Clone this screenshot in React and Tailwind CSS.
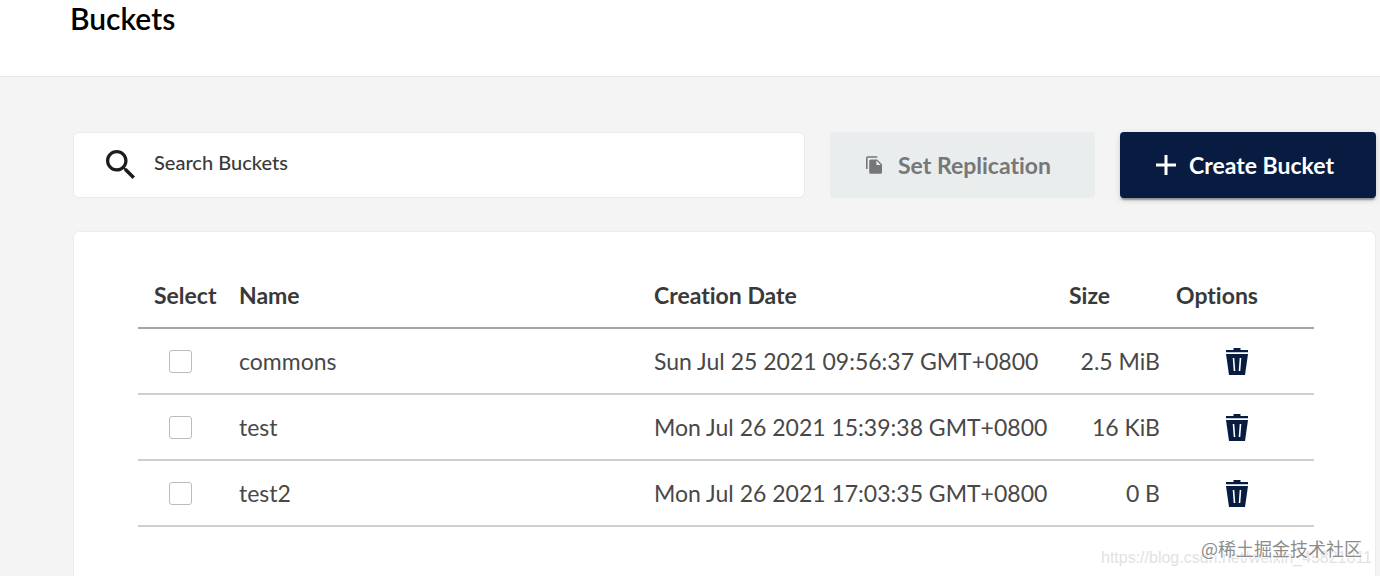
const buckets = [
  { name: "commons", created: "Sun Jul 25 2021 09:56:37 GMT+0800", size: "2.5 MiB" },
  { name: "test", created: "Mon Jul 26 2021 15:39:38 GMT+0800", size: "16 KiB" },
  { name: "test2", created: "Mon Jul 26 2021 17:03:35 GMT+0800", size: "0 B" },
];

function SearchIcon() {
  return (
    <svg aria-hidden="true" viewBox="3 3 17.49 17.49" className="size-[29px] shrink-0 fill-[#1c1c1c]">
      <path d="M15.5 14h-.79l-.28-.27C15.41 12.59 16 11.11 16 9.5 16 5.91 13.09 3 9.5 3S3 5.91 3 9.5 5.91 16 9.5 16c1.61 0 3.09-.59 4.23-1.57l.27.28v.79l5 4.99L20.49 19l-4.99-5zm-6 0C7.01 14 5 11.99 5 9.5S7.01 5 9.5 5 14 7.01 14 9.5 11.99 14 9.5 14z" />
    </svg>
  );
}

function CopyIcon() {
  return (
    <svg aria-hidden="true" viewBox="2 1 20 22" className="h-[18px] w-4 shrink-0 fill-[#767778]">
      <path d="M16 1H4a2 2 0 0 0-2 2v14h2V3h12z" />
      <path fillRule="evenodd" d="M8 5h8l6 6v10a2 2 0 0 1-2 2H8a2 2 0 0 1-2-2V7a2 2 0 0 1 2-2zm7 1.500V12h5.500z" />
    </svg>
  );
}

function PlusIcon() {
  return (
    <svg aria-hidden="true" viewBox="0 0 20 20" className="size-5 shrink-0 fill-white">
      <path d="M8.500 0h3v8.500H20v3h-8.500V20h-3v-8.500H0v-3h8.500z" />
    </svg>
  );
}

function TrashIcon() {
  return (
    <svg aria-hidden="true" viewBox="0 0 22 27" className="h-[27px] w-[22px] fill-[#081c42]">
      <path d="M7.500 0h7v2H22v2.300H0V2h7.500z" />
      <path d="M0 6h22l-3 21H3z" />
      <path d="M7.500 10l1 13M14.500 10l-1 13" fill="none" stroke="#fff" strokeWidth="1.600" />
    </svg>
  );
}

export default function App() {
  return (
    <div className="relative flex min-h-screen flex-col overflow-hidden bg-[#f4f4f4] font-['Lato','Noto_Sans_CJK_SC',sans-serif] text-[#393939] [font-variant-ligatures:none]">
      <header className="border-b border-[#e3e5e6] bg-white pb-10 pl-[70px]">
        <h1 className="text-[30px]/[36px] font-semibold text-black">Buckets</h1>
      </header>

      <main className="flex grow flex-col gap-[33px] pt-[55px] pr-1 pl-[73px]">
        <div className="flex gap-[25px]">
          <label className="flex h-[66px] grow items-center gap-[19px] rounded-md border border-[#e9ebec] bg-white pb-0.5 pl-8">
            <SearchIcon />
            <input
              type="search"
              aria-label="Search Buckets"
              placeholder="Search Buckets"
              className="min-w-0 grow bg-transparent pb-1 text-xl font-medium outline-none placeholder:text-[#393939] placeholder:opacity-100"
            />
          </label>
          <button
            type="button"
            disabled
            className="flex h-[66px] items-center gap-4 rounded-sm bg-[#eaeded] pr-11 pl-9 text-[23px] font-bold whitespace-nowrap text-[#767778]"
          >
            <CopyIcon />
            Set Replication
          </button>
          <button
            type="button"
            className="flex h-[66px] items-center gap-[13px] rounded-sm bg-[#081c42] pr-[42px] pl-9 text-[23px] font-bold whitespace-nowrap text-white shadow-[0_3px_2px_-1px_rgba(0,0,0,0.35),0_2px_6px_rgba(0,0,0,0.15)]"
          >
            <PlusIcon />
            Create Bucket
          </button>
        </div>

        <section className="grow rounded-t-md border border-b-0 border-[#eaedee] bg-white pt-[30px] pr-[61px] pl-16">
          <table className="w-full table-fixed border-collapse text-[23px]">
            <colgroup>
              <col className="w-[101px]" />
              <col />
              <col />
              <col className="w-[107px]" />
              <col className="w-[138px]" />
            </colgroup>
            <thead>
              <tr className="h-[66px] border-b-2 border-[#a5a6a6] text-left *:pt-0.5">
                <th className="pl-4 font-bold">Select</th>
                <th className="font-bold">Name</th>
                <th className="font-bold">Creation Date</th>
                <th className="font-bold">Size</th>
                <th className="font-bold">Options</th>
              </tr>
            </thead>
            <tbody>
              {buckets.map((bucket) => (
                <tr key={bucket.name} className="h-[66px] border-b-2 border-[#cfcfcf] text-[#484848]">
                  <td className="pl-[31px]">
                    <input
                      type="checkbox"
                      aria-label={`Select ${bucket.name}`}
                      className="block size-[23px] appearance-none rounded-[3px] border border-[#bcbcbc] bg-white checked:bg-[#081c42]"
                    />
                  </td>
                  <td>{bucket.name}</td>
                  <td className="whitespace-nowrap">{bucket.created}</td>
                  <td className="pr-4 text-right whitespace-nowrap">{bucket.size}</td>
                  <td className="pl-[50px]">
                    <button type="button" aria-label={`Delete ${bucket.name}`} className="block">
                      <TrashIcon />
                    </button>
                  </td>
                </tr>
              ))}
            </tbody>
          </table>
        </section>
      </main>

      <p className="pointer-events-none absolute right-2 bottom-1.5 font-['Liberation_Sans',sans-serif] text-base/6 text-[#e2e2e2]">
        https://blog.csdn.net/weixin_45821811
      </p>
      <p className="pointer-events-none absolute right-[18px] bottom-4 font-['Noto_Sans_CJK_SC',sans-serif] text-lg/6 text-[#8c8c8c] [text-shadow:1px_1px_1px_#fff]">
        @稀土掘金技术社区
      </p>
    </div>
  );
}
